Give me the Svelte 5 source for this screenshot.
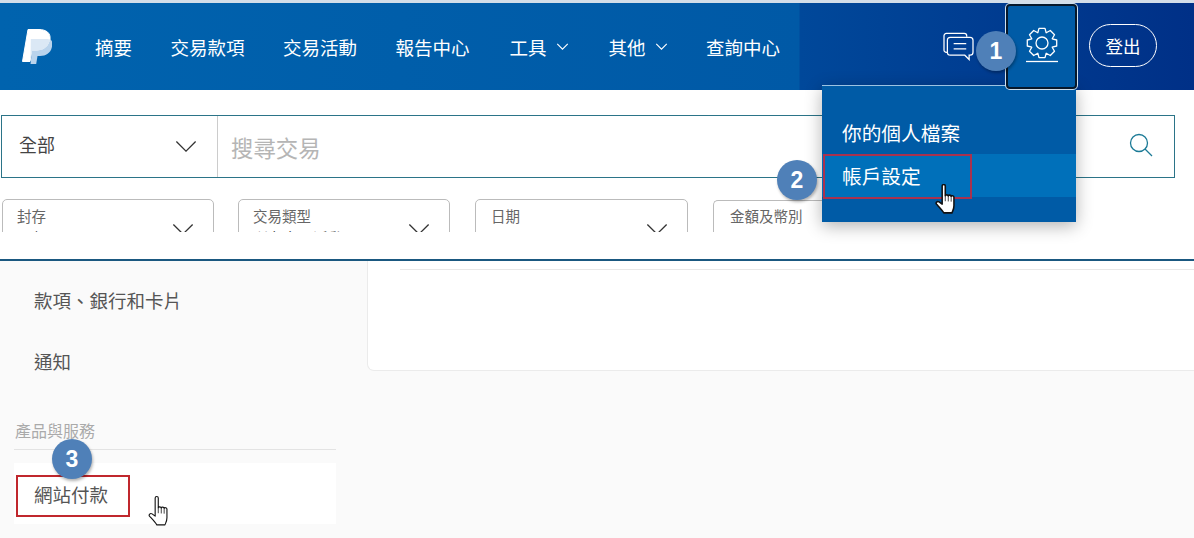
<script>
  const navItems = [
    { label: "摘要" },
    { label: "交易款項" },
    { label: "交易活動" },
    { label: "報告中心" },
    { label: "工具", caret: true },
    { label: "其他", caret: true },
    { label: "查詢中心" }
  ]

  const filters = [
    { label: "封存", value: "全部", chevron: true },
    { label: "交易類型", value: "所有交易活動", chevron: true },
    { label: "日期", value: "", chevron: true },
    { label: "金額及幣別", value: "", chevron: false }
  ]

  // outline of the settings cog, 8 teeth around 16,16
  function gearPath() {
    const pts = []
    for (let i = 0; i < 8; i++) {
      const a = (i * Math.PI) / 4 - Math.PI / 2
      const steps = [
        [-0.39, 11],
        [-0.2, 15],
        [0.2, 15],
        [0.39, 11]
      ]
      for (const [da, r] of steps) {
        pts.push(
          (16 + r * Math.cos(a + da)).toFixed(1) + "," + (16 + r * Math.sin(a + da)).toFixed(1)
        )
      }
    }
    return "M" + pts.join("L") + "Z"
  }
</script>

{#snippet chevron()}
  <svg class="chevron" viewBox="0 0 24 14" fill="none" stroke="#333" stroke-width="1.4">
    <path d="M1.5 1.5 12 12 22.5 1.5" />
  </svg>
{/snippet}

{#snippet hand(weight)}
  <svg class="hand-svg" viewBox="1 0.5 18 27">
    <path
      d="M7 2.200c0-1.600 2.800-1.600 2.800 0V11c0-.9 2.600-1.100 2.700.2 0-1 2.500-1 2.600.4 .2-.9 2.400-.8 2.500.7V20c0 3-1 4.400-1.800 6.500H8.500C7 24 4.500 21.500 2 18.800c-1.200-1.500 .6-3.200 2.200-2.200L7 18.600Z"
      fill="#fff"
      stroke="#111"
      stroke-width={weight}
      stroke-linejoin="round"
    />
    <path d="M9.800 11v5M12.500 11.200v5M15.100 11.600v4.800" stroke="#111" stroke-width="0.7" fill="none" />
  </svg>
{/snippet}

<div class="page">
  <header class="nav">
    <svg class="logo" viewBox="0 0 30 36" stroke-linejoin="round">
      <path d="M6 .5h11c7 0 12 3.500 11 10-1 7.500-6.500 11-13 11H10L8 32.500H.5Z" fill="#fff" stroke="#fff" stroke-width="1" />
      <path
        d="M28 10c2.800 1.800 2.600 5 1.800 8.500C28.500 24 24 27 18 27h-2.500l-1.300 8H8.500L10 21.500h5c6.500 0 12-4 13-11.500Z"
        fill="#b9d3ec"
      />
      <path d="M8.800 10H24c1.500 0 3 .3 4 .5-1 6.500-6.500 11-13 11H10l-1.500 11Z" fill="#dbe8f5" />
    </svg>
    <nav class="links">
      {#each navItems as item}
        <span class="link" class:has-caret={item.caret}>
          {item.label}
          {#if item.caret}
            <svg class="caret" viewBox="0 0 14 8" fill="none" stroke="#fff" stroke-width="1.300">
              <path d="M1 1l6 6 6-6" />
            </svg>
          {/if}
        </span>
      {/each}
    </nav>
    <div class="actions">
      <svg class="chat" viewBox="0 0 32 30" fill="none" stroke="#fff" stroke-width="1.300">
        <path d="M5 21H3.500C2 21 1 20 1 18.500V4C1 2.500 2 1.500 3.500 1.500H22c1.500 0 2.500 1 2.500 2.500v1" />
        <path
          d="M7.500 5.500H28c1.800 0 3 1.200 3 3V21c0 1.800-1.200 3-3 3h-1v4.500L22.500 24H7.500c-1.800 0-3-1.200-3-3V8.500c0-1.800 1.200-3 3-3Z"
          fill="#003f94"
        />
        <path d="M11 12h13M11 17.500h13" />
      </svg>
      <div class="settings">
        <svg class="gear" viewBox="0 0 32 36" fill="none" stroke="#fff" stroke-width="1.300">
          <path d={gearPath()} stroke-linejoin="round" />
          <circle cx="16" cy="16" r="6" />
          <path d="M0 34.500h32" />
        </svg>
      </div>
      <span class="logout">登出</span>
    </div>
  </header>

  <section class="search-area">
    <div class="search">
      <div class="scope">
        <span>全部</span>
        {@render chevron()}
      </div>
      <div class="query">搜尋交易</div>
      <svg class="magnifier" viewBox="0 0 24 24" fill="none" stroke="#1b7a96" stroke-width="1.300">
        <circle cx="10" cy="10" r="8.500" />
        <path d="M16 16l7 7" />
      </svg>
    </div>
    <div class="filters">
      {#each filters as f}
        <div class="filter">
          <div class="filter-text">
            <div class="filter-label">{f.label}</div>
            <div class="filter-value">{f.value}</div>
          </div>
          {#if f.chevron}
            {@render chevron()}
          {/if}
        </div>
      {/each}
    </div>
  </section>

  <main class="lower">
    <aside class="sidebar">
      <div class="side-item">款項、銀行和卡片</div>
      <div class="side-item">通知</div>
      <div class="side-title">產品與服務</div>
      <div class="side-item active">網站付款</div>
    </aside>
    <div class="content">
      <div class="card">
        <div class="card-rule"></div>
      </div>
    </div>
  </main>

  <!-- menu opened from the cog -->
  <div class="menu">
    <div class="menu-item">你的個人檔案</div>
    <div class="menu-item hover">帳戶設定</div>
  </div>

  <!-- tutorial annotations painted over the capture -->
  <div class="mark mark-2"></div>
  <div class="mark mark-3"></div>
  <div class="badge badge-1">1</div>
  <div class="badge badge-2">2</div>
  <div class="badge badge-3">3</div>
  <div class="hand hand-1">{@render hand(1.4)}</div>
  <div class="hand hand-2">{@render hand(1)}</div>
</div>

<style>
  :global(body) {
    margin: 0;
    background: #fff;
  }

  .page {
    position: relative;
    width: 1194px;
    height: 538px;
    overflow: hidden;
    background: #fff;
    border-top: 3px solid #d3dee9;
    box-sizing: border-box;
    font-family: "Liberation Sans", "Noto Sans CJK TC", sans-serif;
    color: #333;
  }

  .nav {
    display: flex;
    align-items: center;
    height: 87px;
    padding-left: 22px;
    box-sizing: border-box;
    background: linear-gradient(90deg, #0063ae 0, #0059a6 799px, #00489a 800px, #003087 1194px);
    color: #fff;
  }

  .logo {
    width: 30px;
    height: 36px;
    flex: none;
  }

  .links {
    display: flex;
    gap: 38.500px;
    margin-left: 43px;
    font-size: 18.500px;
  }

  .link {
    display: flex;
    align-items: center;
    white-space: nowrap;
  }

  .link.has-caret {
    margin-left: 1.500px;
  }

  .caret {
    width: 13px;
    height: 7px;
    margin-left: 9px;
  }

  .actions {
    display: flex;
    align-items: center;
    margin-left: auto;
    margin-right: 37px;
    height: 100%;
  }

  .chat {
    width: 31px;
    height: 29px;
    margin-right: 32px;
    margin-top: -1px;
  }

  .settings {
    position: relative;
    z-index: 2;
    display: flex;
    align-items: center;
    justify-content: center;
    width: 71px;
    height: 85px;
    box-sizing: border-box;
    margin-top: -1px;
    background: #005ba6;
    border: 2px solid #06182b;
    border-radius: 4px;
    box-shadow: 0 0 0 1px #cfe0ef;
  }

  .gear {
    width: 32px;
    height: 36px;
    margin-top: -2px;
  }

  .logout {
    display: flex;
    align-items: center;
    justify-content: center;
    width: 68px;
    height: 43px;
    margin-left: 12px;
    margin-top: -3px;
    box-sizing: border-box;
    border: 1px solid #fff;
    border-radius: 22px;
    font-size: 17.500px;
  }

  .search-area {
    height: 142px;
    padding: 25px 19px 0 1px;
    box-sizing: border-box;
  }

  .search {
    display: flex;
    align-items: center;
    height: 63px;
    box-sizing: border-box;
    border: 1px solid #2b7488;
  }

  .scope {
    display: flex;
    align-items: center;
    justify-content: space-between;
    width: 216px;
    height: 61px;
    flex: none;
    box-sizing: border-box;
    padding: 0 20px 0 17px;
    border-right: 1px solid #ccc;
    font-size: 18px;
    color: #444;
  }

  .scope span {
    margin-top: -6px;
  }

  .chevron {
    width: 22px;
    height: 13px;
    flex: none;
  }

  .query {
    flex: 1;
    padding-left: 13px;
    font-size: 22.400px;
    color: #b5b5b5;
  }

  .magnifier {
    width: 24px;
    height: 24px;
    margin-right: 21px;
    margin-top: -3px;
  }

  .filters {
    display: flex;
    gap: 24px;
    height: 33px;
    margin-top: 21px;
    padding-left: 1px;
    overflow: hidden;
  }

  .filter {
    display: flex;
    justify-content: space-between;
    width: 212px;
    height: 56px;
    flex: none;
    box-sizing: border-box;
    padding: 8px 19px 0 14px;
    border: 1px solid #bbb;
    border-radius: 5px;
  }

  .filter:nth-child(3) {
    width: 213px;
    margin-left: 1px;
    padding-left: 15px;
  }

  /* runs on behind the open menu, its right end is not in view */
  .filter:last-child {
    width: 120px;
    margin-left: 1px;
    margin-top: 1px;
    padding: 7px 0 0 16px;
    border-right: none;
    border-top-right-radius: 0;
  }

  .filter .chevron {
    margin-top: 15px;
  }

  .filter-label {
    font-size: 14.500px;
    line-height: 19px;
    color: #666;
  }

  .filter-value {
    font-size: 15px;
    line-height: 20px;
    margin-top: 2px;
    color: #333;
  }

  .lower {
    display: flex;
    height: 279px;
    margin-top: 27px;
    border-top: 2px solid #1a5880;
    background: #fafafa;
  }

  .sidebar {
    width: 367px;
    flex: none;
    padding: 8px 31px 0 14px;
    box-sizing: border-box;
  }

  .side-item {
    display: flex;
    align-items: center;
    height: 61px;
    padding-left: 20px;
    font-size: 18.500px;
    color: #555;
  }

  .side-title {
    margin-top: 27px;
    height: 32px;
    box-sizing: border-box;
    padding: 2px 0 0 1px;
    border-bottom: 1px solid #e3e3e3;
    font-size: 16px;
    line-height: 24px;
    color: #aaa;
  }

  .side-item.active {
    margin-top: 13px;
    background: #fff;
  }

  .content {
    flex: 1;
  }

  .card {
    height: 110px;
    box-sizing: border-box;
    padding: 8px 0 0 32px;
    background: #fff;
    border-left: 1px solid #ebebeb;
    border-bottom: 1px solid #ebebeb;
    border-bottom-left-radius: 7px;
  }

  .card-rule {
    border-top: 1px solid #e8e8e8;
  }

  .menu {
    position: absolute;
    left: 822px;
    top: 82px;
    width: 254px;
    height: 137px;
    box-sizing: border-box;
    padding-top: 25px;
    background: #005ba6;
    border-top: 1px solid #9cc3e2;
    box-shadow: 0 4px 16px rgba(0, 0, 0, 0.3);
    color: #fff;
  }

  .menu-item {
    display: flex;
    align-items: center;
    height: 43px;
    padding-left: 20px;
    font-size: 19.700px;
  }

  .menu-item.hover {
    background: #0070ba;
  }

  .mark {
    position: absolute;
    box-sizing: border-box;
    border: 2.500px solid #c0272d;
  }

  .mark-2 {
    left: 823px;
    top: 151px;
    width: 149px;
    height: 45px;
    border-color: #a9324f;
  }

  .mark-3 {
    left: 16px;
    top: 472px;
    width: 114px;
    height: 42px;
  }

  .badge {
    position: absolute;
    z-index: 3;
    width: 40px;
    height: 40px;
    border-radius: 50%;
    display: flex;
    align-items: center;
    justify-content: center;
    background: #4f80b8;
    box-shadow: 1px 2px 3px rgba(0, 0, 0, 0.3);
    color: #fff;
    font-size: 23px;
    font-weight: bold;
  }

  .badge-1 {
    left: 976px;
    top: 28px;
  }

  .badge-2 {
    left: 777px;
    top: 157px;
  }

  .badge-3 {
    left: 52px;
    top: 436px;
  }

  .hand {
    position: absolute;
    z-index: 3;
    width: 21px;
    height: 30px;
  }

  .hand-svg {
    display: block;
    width: 100%;
    height: 100%;
  }

  .hand-1 {
    left: 935px;
    top: 181px;
  }

  .hand-2 {
    left: 148px;
    top: 493px;
  }
</style>
